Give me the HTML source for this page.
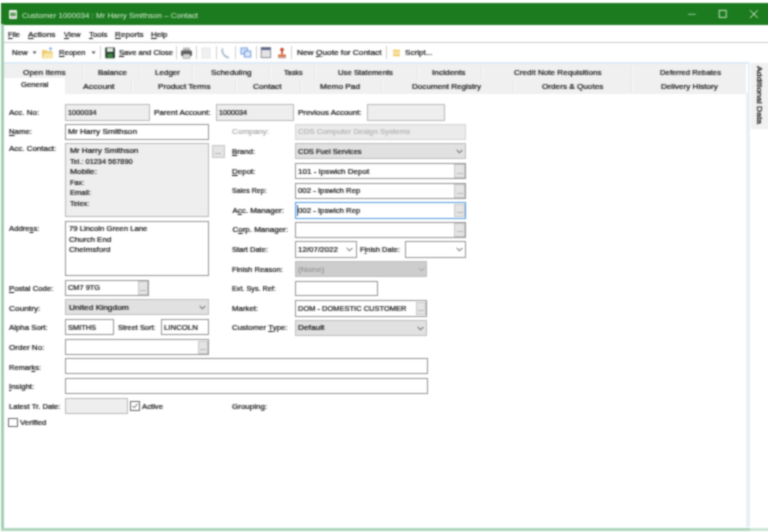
<!DOCTYPE html>
<html><head><meta charset="utf-8"><title>Customer</title>
<style>
html,body{margin:0;padding:0;background:#fff;}
body{width:768px;height:532px;position:relative;overflow:hidden;font-family:"Liberation Sans",sans-serif;font-size:8px;line-height:10px;}
#root{background:#fff;position:absolute;left:0;top:0;width:768px;height:532px;filter:url(#bl);}
.t{position:absolute;white-space:pre;transform-origin:0 50%;height:10px;-webkit-text-stroke:0.22px currentColor;}
.t u{text-decoration:underline;text-underline-offset:1px;text-decoration-thickness:0.6px;}
.nt{-webkit-text-stroke:0 !important;}
.b{position:absolute;box-sizing:content-box;}
</style></head><body><svg width="0" height="0" style="position:absolute"><defs><filter id="bl" x="0" y="0" width="100%" height="100%" color-interpolation-filters="sRGB"><feConvolveMatrix order="5" kernelMatrix="0.00048 0.00501 0.01095 0.00501 0.00048 0.00501 0.05222 0.11405 0.05222 0.00501 0.01095 0.11405 0.24912 0.11405 0.01095 0.00501 0.05222 0.11405 0.05222 0.00501 0.00048 0.00501 0.01095 0.00501 0.00048" divisor="1" edgeMode="duplicate" preserveAlpha="true"/></filter></defs></svg>
<div id="root">
<!-- window frame -->
<div class="b" style="left:1.2px;top:3.3px;width:767px;height:21.4px;background:#1c7b1f"></div>
<div class="b" style="left:1.3px;top:24px;width:2.3px;height:506.5px;background:#a3cfb4"></div>
<div class="b" style="left:1px;top:528px;width:767px;height:2.6px;background:#b0d6be"></div>
<div class="b" style="left:750px;top:528px;width:18px;height:2.6px;background:#cde5d5"></div>
<!-- menu/toolbar lines -->
<div class="b" style="left:4px;top:41.5px;width:764px;height:1.2px;background:#c9c9c9"></div>
<div class="b" style="left:4px;top:61.6px;width:746px;height:2.4px;background:#dcebf8"></div>
<!-- tabs -->
<div class="b" style="left:4px;top:64.3px;width:742px;height:29.4px;background:#f0f0f0"></div>
<div class="b" style="left:4px;top:78.2px;width:61px;height:16px;background:#fff"></div>
<div class="b" style="left:745.6px;top:93px;width:2px;height:434px;background:#efefef"></div>
<div class="b" style="left:747.6px;top:62px;width:2.4px;height:465px;background:#e3effa"></div>
<div class="b" style="left:750.8px;top:63px;width:17.2px;height:66px;background:#f1f1f1"></div>
<span class="t" style="left:763.6px;top:65.8px;transform-origin:0 0;transform:rotate(90deg) scaleX(1.07);color:#111">Additional Data</span>

<!-- title icon -->
<svg class="b" style="left:9px;top:10px" width="8" height="9" viewBox="0 0 8 9"><rect x="0" y="0" width="8" height="9" rx="0.8" fill="#e8f0e6"/><rect x="1.2" y="2.6" width="5.6" height="3.4" fill="#5a9a55"/><rect x="1" y="6.8" width="6" height="1" fill="#c9b8c9"/></svg>
<!-- window controls -->
<svg class="b" style="left:684px;top:8px" width="80" height="12" viewBox="0 0 80 12"><path d="M4 6.3 H11.6" stroke="#96cb98" stroke-width="1" fill="none"/><rect x="35.2" y="2.4" width="7" height="7" fill="none" stroke="#c4e2c4" stroke-width="1"/><path d="M66 2.2 L73.8 10 M73.8 2.2 L66 10" stroke="#d4ead4" stroke-width="1" fill="none"/></svg>
<!-- toolbar icons -->
<svg class="b" style="left:0;top:43.9px" width="440" height="18" viewBox="0 0 440 18">
<path d="M32.6 7.4 h4 l-2 2.6z" fill="#444"/>
<path d="M91.6 7.4 h4 l-2 2.6z" fill="#444"/>
<!-- folder -->
<path d="M42 6 h4 l1 1.2 h5.5 v7 h-10.5z" fill="#ecc96a"/><path d="M42.3 14.2 l2-5 h9.3 l-2 5z" fill="#f8e6a8"/><path d="M50.5 2.5 l0.8 1.7 1.7 0.5 -1.7 0.6 -0.8 1.7 -0.7 -1.7 -1.7 -0.6 1.7 -0.5z" fill="#7aa6e0"/>
<!-- save -->
<rect x="105.3" y="3.6" width="9.6" height="10.6" rx="0.6" fill="#26382a"/><rect x="107" y="4.2" width="6.2" height="3.6" fill="#e8efe8"/><rect x="107.4" y="9.6" width="5.4" height="4" fill="#3f8a45"/>
<!-- printer -->
<rect x="183" y="3.6" width="7" height="3.4" fill="#b8b8b8"/><rect x="181" y="6.4" width="11" height="5.6" rx="1" fill="#5e5e5e"/><rect x="183" y="10" width="7" height="4.2" fill="#d8d8d8" stroke="#777" stroke-width="0.5"/>
<!-- dim doc -->
<rect x="202" y="4" width="8" height="10" fill="#f0f0f0" stroke="#e0e0e0" stroke-width="0.8"/>
<!-- phone -->
<path d="M222.5 4.5 q-1 4.5 2.5 7.5 q2 1.8 4 1.2" fill="none" stroke="#a9bccb" stroke-width="1.8"/>
<!-- copy -->
<rect x="241" y="4" width="6.4" height="6" fill="#dbe8fa" stroke="#5f8fd8" stroke-width="0.9"/><rect x="244.4" y="7" width="6.4" height="6" fill="#dbe8fa" stroke="#5f8fd8" stroke-width="0.9"/>
<!-- calendar -->
<rect x="261.2" y="3.6" width="9.4" height="10" fill="#e4e4e6" stroke="#8a8c94" stroke-width="1"/><rect x="261.2" y="3.6" width="9.4" height="2.4" fill="#5a6488"/>
<!-- stamp -->
<circle cx="282" cy="5.6" r="1.9" fill="#c8482a"/><rect x="281.2" y="6.5" width="1.6" height="4" fill="#c8482a"/><rect x="278" y="10.4" width="8" height="2.4" rx="0.6" fill="#d86a3a"/><rect x="278" y="13.2" width="8" height="1" fill="#a88"/>
<!-- script -->
<rect x="393" y="5" width="7" height="8" rx="1" fill="#fbf4dc"/><path d="M393 6.6 h7 M393 9 h7 M393 11.4 h7" stroke="#eec04a" stroke-width="1.2"/>
</svg>
<div class="b" style="left:82px;top:66px;width:1px;height:12px;background:#e4e4e4"></div><div class="b" style="left:83px;top:66px;width:1px;height:12px;background:#fbfbfb"></div>
<div class="b" style="left:139px;top:66px;width:1px;height:12px;background:#e4e4e4"></div><div class="b" style="left:140px;top:66px;width:1px;height:12px;background:#fbfbfb"></div>
<div class="b" style="left:192px;top:66px;width:1px;height:12px;background:#e4e4e4"></div><div class="b" style="left:193px;top:66px;width:1px;height:12px;background:#fbfbfb"></div>
<div class="b" style="left:268.6px;top:66px;width:1px;height:12px;background:#e4e4e4"></div><div class="b" style="left:269.6px;top:66px;width:1px;height:12px;background:#fbfbfb"></div>
<div class="b" style="left:314px;top:66px;width:1px;height:12px;background:#e4e4e4"></div><div class="b" style="left:315px;top:66px;width:1px;height:12px;background:#fbfbfb"></div>
<div class="b" style="left:416.5px;top:66px;width:1px;height:12px;background:#e4e4e4"></div><div class="b" style="left:417.5px;top:66px;width:1px;height:12px;background:#fbfbfb"></div>
<div class="b" style="left:481px;top:66px;width:1px;height:12px;background:#e4e4e4"></div><div class="b" style="left:482px;top:66px;width:1px;height:12px;background:#fbfbfb"></div>
<div class="b" style="left:631px;top:66px;width:1px;height:12px;background:#e4e4e4"></div><div class="b" style="left:632px;top:66px;width:1px;height:12px;background:#fbfbfb"></div>
<div class="b" style="left:131px;top:80px;width:1px;height:12px;background:#e4e4e4"></div><div class="b" style="left:132px;top:80px;width:1px;height:12px;background:#fbfbfb"></div>
<div class="b" style="left:235px;top:80px;width:1px;height:12px;background:#e4e4e4"></div><div class="b" style="left:236px;top:80px;width:1px;height:12px;background:#fbfbfb"></div>
<div class="b" style="left:300px;top:80px;width:1px;height:12px;background:#e4e4e4"></div><div class="b" style="left:301px;top:80px;width:1px;height:12px;background:#fbfbfb"></div>
<div class="b" style="left:381px;top:80px;width:1px;height:12px;background:#e4e4e4"></div><div class="b" style="left:382px;top:80px;width:1px;height:12px;background:#fbfbfb"></div>
<div class="b" style="left:512.5px;top:80px;width:1px;height:12px;background:#e4e4e4"></div><div class="b" style="left:513.5px;top:80px;width:1px;height:12px;background:#fbfbfb"></div>
<div class="b" style="left:630.5px;top:80px;width:1px;height:12px;background:#e4e4e4"></div><div class="b" style="left:631.5px;top:80px;width:1px;height:12px;background:#fbfbfb"></div>
<div class="b" style="left:99.5px;top:46px;width:1.3px;height:13px;background:#cecece"></div>
<div class="b" style="left:175.5px;top:46px;width:1.3px;height:13px;background:#cecece"></div>
<div class="b" style="left:196.0px;top:46px;width:1.3px;height:13px;background:#cecece"></div>
<div class="b" style="left:215.5px;top:46px;width:1.3px;height:13px;background:#cecece"></div>
<div class="b" style="left:234.5px;top:46px;width:1.3px;height:13px;background:#cecece"></div>
<div class="b" style="left:256.0px;top:46px;width:1.3px;height:13px;background:#cecece"></div>
<div class="b" style="left:290.5px;top:46px;width:1.3px;height:13px;background:#cecece"></div>
<div class="b" style="left:386.0px;top:46px;width:1.3px;height:13px;background:#cecece"></div>
<div class="b" style="left:64.5px;top:103.5px;width:83.0px;height:15.0px;background:#eeeeee;border:1px solid #b8b8b8;"></div>
<div class="b" style="left:216.0px;top:103.5px;width:75.5px;height:15.0px;background:#eeeeee;border:1px solid #b8b8b8;"></div>
<div class="b" style="left:366.5px;top:103.5px;width:76.0px;height:15.0px;background:#eeeeee;border:1px solid #b8b8b8;"></div>
<div class="b" style="left:64.5px;top:123.8px;width:142.6px;height:14.7px;background:#fff;border:1px solid #939393;"></div>
<div class="b" style="left:64.5px;top:142.5px;width:142.6px;height:72.0px;background:#eeeeee;border:1px solid #b8b8b8;"></div>
<div class="b" style="left:211.5px;top:144.5px;width:11.0px;height:11.0px;background:#e4e4e4;border:1px solid #c4c4c4;"></div>
<div class="b" style="left:64.5px;top:221.0px;width:142.6px;height:53.0px;background:#fff;border:1px solid #939393;"></div>
<div class="b" style="left:64.5px;top:279.5px;width:82.0px;height:14.5px;background:#fff;border:1px solid #939393;"></div>
<div class="b" style="left:137.5px;top:281.0px;width:8.0px;height:11.5px;background:#e4e4e4;border:1px solid #c8c8c8;"></div>
<div class="b" style="left:64.5px;top:299.0px;width:142.6px;height:14.0px;background:#e1e1e1;border:1px solid #bcbcbc;"></div>
<div class="b" style="left:64.5px;top:318.9px;width:47.5px;height:14.4px;background:#fff;border:1px solid #939393;"></div>
<div class="b" style="left:161.0px;top:318.9px;width:46.1px;height:14.4px;background:#fff;border:1px solid #939393;"></div>
<div class="b" style="left:64.5px;top:338.9px;width:142.6px;height:14.1px;background:#fff;border:1px solid #939393;"></div>
<div class="b" style="left:197.5px;top:340.5px;width:8.6px;height:11.0px;background:#e4e4e4;border:1px solid #c8c8c8;"></div>
<div class="b" style="left:64.5px;top:358.3px;width:361.3px;height:14.2px;background:#fff;border:1px solid #939393;"></div>
<div class="b" style="left:64.5px;top:378.0px;width:361.3px;height:14.3px;background:#fff;border:1px solid #939393;"></div>
<div class="b" style="left:64.5px;top:397.8px;width:61.0px;height:14.3px;background:#eeeeee;border:1px solid #b8b8b8;"></div>
<div class="b" style="left:129.7px;top:400.9px;width:8.0px;height:8.0px;background:#fff;border:1px solid #666;"></div>
<div class="b" style="left:8.0px;top:417.5px;width:7.7px;height:7.7px;background:#fff;border:1px solid #666;"></div>
<div class="b" style="left:295.2px;top:124.0px;width:169.1px;height:14.2px;background:#ebebeb;border:1px solid #d4d4d4;"></div>
<div class="b" style="left:295.2px;top:143.2px;width:169.1px;height:14.3px;background:#e1e1e1;border:1px solid #bcbcbc;"></div>
<div class="b" style="left:295.2px;top:162.8px;width:169.1px;height:14.7px;background:#fff;border:1px solid #939393;"></div>
<div class="b" style="left:454.0px;top:164.3px;width:9.0px;height:11.7px;background:#e4e4e4;border:1px solid #c8c8c8;"></div>
<div class="b" style="left:295.2px;top:182.5px;width:169.1px;height:14.6px;background:#fff;border:1px solid #939393;"></div>
<div class="b" style="left:454.0px;top:184.0px;width:9.0px;height:11.7px;background:#e4e4e4;border:1px solid #c8c8c8;"></div>
<div class="b" style="left:295.2px;top:202.0px;width:169.1px;height:14.5px;background:#fff;border:1px solid #4a96e2;"></div>
<div class="b" style="left:454.0px;top:203.5px;width:9.0px;height:11.6px;background:#e4e4e4;border:1px solid #c8c8c8;"></div>
<div class="b" style="left:295.2px;top:221.5px;width:169.1px;height:14.5px;background:#fff;border:1px solid #939393;"></div>
<div class="b" style="left:454.0px;top:223.0px;width:9.0px;height:11.5px;background:#e4e4e4;border:1px solid #c8c8c8;"></div>
<div class="b" style="left:295.2px;top:241.1px;width:59.6px;height:14.6px;background:#fff;border:1px solid #939393;"></div>
<div class="b" style="left:404.5px;top:241.1px;width:59.8px;height:14.6px;background:#fff;border:1px solid #939393;"></div>
<div class="b" style="left:295.2px;top:260.5px;width:129.9px;height:14.7px;background:#cdcdcd;border:1px solid #bdbdbd;"></div>
<div class="b" style="left:295.2px;top:280.7px;width:81.0px;height:13.8px;background:#fff;border:1px solid #939393;"></div>
<div class="b" style="left:295.2px;top:300.2px;width:129.9px;height:14.5px;background:#fff;border:1px solid #939393;"></div>
<div class="b" style="left:415.5px;top:301.7px;width:8.4px;height:11.6px;background:#e4e4e4;border:1px solid #c8c8c8;"></div>
<div class="b" style="left:295.2px;top:319.8px;width:129.9px;height:14.0px;background:#e1e1e1;border:1px solid #bcbcbc;"></div>
<svg class="b" style="left:455.5px;top:149.3px" width="7" height="5" viewBox="0 0 7 5"><path d="M0.7 1 L3.5 3.8 L6.3 1" fill="none" stroke="#333" stroke-width="0.95"/></svg>
<svg class="b" style="left:346.1px;top:247.3px" width="7" height="5" viewBox="0 0 7 5"><path d="M0.7 1 L3.5 3.8 L6.3 1" fill="none" stroke="#333" stroke-width="0.95"/></svg>
<svg class="b" style="left:455.5px;top:247.3px" width="7" height="5" viewBox="0 0 7 5"><path d="M0.7 1 L3.5 3.8 L6.3 1" fill="none" stroke="#333" stroke-width="0.95"/></svg>
<svg class="b" style="left:418.0px;top:266.7px" width="7" height="5" viewBox="0 0 7 5"><path d="M0.7 1 L3.5 3.8 L6.3 1" fill="none" stroke="#999" stroke-width="0.95"/></svg>
<svg class="b" style="left:417.2px;top:325.7px" width="7" height="5" viewBox="0 0 7 5"><path d="M0.7 1 L3.5 3.8 L6.3 1" fill="none" stroke="#333" stroke-width="0.95"/></svg>
<svg class="b" style="left:198.5px;top:305.3px" width="7" height="5" viewBox="0 0 7 5"><path d="M0.7 1 L3.5 3.8 L6.3 1" fill="none" stroke="#333" stroke-width="0.95"/></svg>
<svg class="b" style="left:215px;top:152.5px" width="6" height="1.2" viewBox="0 0 6 1.2"><rect x="0.4" y="0" width="1" height="1" fill="#888"/><rect x="2.5" y="0" width="1" height="1" fill="#888"/><rect x="4.6" y="0" width="1" height="1" fill="#888"/></svg>
<svg class="b" style="left:139.5px;top:289.5px" width="6" height="1.2" viewBox="0 0 6 1.2"><rect x="0.4" y="0" width="1" height="1" fill="#888"/><rect x="2.5" y="0" width="1" height="1" fill="#888"/><rect x="4.6" y="0" width="1" height="1" fill="#888"/></svg>
<svg class="b" style="left:200px;top:348.5px" width="6" height="1.2" viewBox="0 0 6 1.2"><rect x="0.4" y="0" width="1" height="1" fill="#888"/><rect x="2.5" y="0" width="1" height="1" fill="#888"/><rect x="4.6" y="0" width="1" height="1" fill="#888"/></svg>
<svg class="b" style="left:456.5px;top:172.5px" width="6" height="1.2" viewBox="0 0 6 1.2"><rect x="0.4" y="0" width="1" height="1" fill="#888"/><rect x="2.5" y="0" width="1" height="1" fill="#888"/><rect x="4.6" y="0" width="1" height="1" fill="#888"/></svg>
<svg class="b" style="left:456.5px;top:192.5px" width="6" height="1.2" viewBox="0 0 6 1.2"><rect x="0.4" y="0" width="1" height="1" fill="#888"/><rect x="2.5" y="0" width="1" height="1" fill="#888"/><rect x="4.6" y="0" width="1" height="1" fill="#888"/></svg>
<svg class="b" style="left:456.5px;top:212.0px" width="6" height="1.2" viewBox="0 0 6 1.2"><rect x="0.4" y="0" width="1" height="1" fill="#888"/><rect x="2.5" y="0" width="1" height="1" fill="#888"/><rect x="4.6" y="0" width="1" height="1" fill="#888"/></svg>
<svg class="b" style="left:456.5px;top:231.0px" width="6" height="1.2" viewBox="0 0 6 1.2"><rect x="0.4" y="0" width="1" height="1" fill="#888"/><rect x="2.5" y="0" width="1" height="1" fill="#888"/><rect x="4.6" y="0" width="1" height="1" fill="#888"/></svg>
<svg class="b" style="left:417.7px;top:310.0px" width="6" height="1.2" viewBox="0 0 6 1.2"><rect x="0.4" y="0" width="1" height="1" fill="#888"/><rect x="2.5" y="0" width="1" height="1" fill="#888"/><rect x="4.6" y="0" width="1" height="1" fill="#888"/></svg>
<svg class="b" style="left:130.7px;top:401.9px" width="8" height="8" viewBox="0 0 8 8"><path d="M1.5 4 L3.2 5.8 L6.6 1.8" fill="none" stroke="#444" stroke-width="0.9"/></svg>
<div class="b" style="left:296.8px;top:205px;width:0.8px;height:10.5px;background:#357"></div>
<span class="t nt" style="left:22.0px;top:10.5px;color:#d4ead4;transform:scaleX(0.990)">Customer 1000034 : Mr Harry Smithson – Contact</span>
<span class="t " style="left:8.0px;top:29.7px;color:#111;transform:scaleX(0.931)"><u>F</u>ile</span>
<span class="t " style="left:27.5px;top:29.7px;color:#111;transform:scaleX(1.048)"><u>A</u>ctions</span>
<span class="t " style="left:63.5px;top:29.7px;color:#111;transform:scaleX(0.959)"><u>V</u>iew</span>
<span class="t " style="left:89.0px;top:29.7px;color:#111;transform:scaleX(0.990)"><u>T</u>ools</span>
<span class="t " style="left:115.0px;top:29.7px;color:#111;transform:scaleX(1.017)"><u>R</u>eports</span>
<span class="t " style="left:151.0px;top:29.7px;color:#111;transform:scaleX(1.003)"><u>H</u>elp</span>
<span class="t " style="left:11.8px;top:47.8px;color:#111;transform:scaleX(0.987)">New</span>
<span class="t " style="left:58.5px;top:47.8px;color:#111;transform:scaleX(0.945)"><u>R</u>eopen</span>
<span class="t " style="left:118.5px;top:47.8px;color:#111;transform:scaleX(0.956)"><u>S</u>ave and Close</span>
<span class="t " style="left:296.5px;top:47.8px;color:#111;transform:scaleX(1.038)">New <u>Q</u>uote for Contact</span>
<span class="t " style="left:405.0px;top:47.8px;color:#111;transform:scaleX(1.014)">Script...</span>
<span class="t " style="left:22.5px;top:68.1px;color:#111;transform:scaleX(1.028)">Open Items</span>
<span class="t " style="left:97.5px;top:68.1px;color:#111;transform:scaleX(1.003)">Balance</span>
<span class="t " style="left:155.0px;top:68.1px;color:#111;transform:scaleX(1.003)">Ledger</span>
<span class="t " style="left:211.0px;top:68.1px;color:#111;transform:scaleX(1.023)">Scheduling</span>
<span class="t " style="left:284.0px;top:68.1px;color:#111;transform:scaleX(0.905)">Tasks</span>
<span class="t " style="left:338.3px;top:68.1px;color:#111;transform:scaleX(0.966)">Use Statements</span>
<span class="t " style="left:432.0px;top:68.1px;color:#111;transform:scaleX(1.043)">Incidents</span>
<span class="t " style="left:514.0px;top:68.1px;color:#111;transform:scaleX(1.014)">Credit Note Requisitions</span>
<span class="t " style="left:660.0px;top:68.1px;color:#111;transform:scaleX(0.966)">Deferred Rebates</span>
<span class="t " style="left:82.5px;top:82.1px;color:#111;transform:scaleX(1.090)">Account</span>
<span class="t " style="left:157.5px;top:82.1px;color:#111;transform:scaleX(1.021)">Product Terms</span>
<span class="t " style="left:252.5px;top:82.1px;color:#111;transform:scaleX(1.033)">Contact</span>
<span class="t " style="left:320.0px;top:82.1px;color:#111;transform:scaleX(1.034)">Memo Pad</span>
<span class="t " style="left:412.0px;top:82.1px;color:#111;transform:scaleX(1.014)">Document Registry</span>
<span class="t " style="left:541.7px;top:82.1px;color:#111;transform:scaleX(1.021)">Orders &amp; Quotes</span>
<span class="t " style="left:661.0px;top:82.1px;color:#111;transform:scaleX(1.014)">Delivery History</span>
<span class="t " style="left:21.0px;top:80.2px;color:#111;transform:scaleX(0.966)">General</span>
<span class="t " style="left:8.6px;top:108.0px;color:#111;transform:scaleX(0.996)">Acc. No:</span>
<span class="t " style="left:8.6px;top:127.2px;color:#111;transform:scaleX(0.972)"><u>N</u>ame:</span>
<span class="t " style="left:8.6px;top:144.1px;color:#111;transform:scaleX(0.994)">Acc. Contact:</span>
<span class="t " style="left:8.6px;top:224.0px;color:#111;transform:scaleX(0.963)">Addre<u>s</u>s:</span>
<span class="t " style="left:8.6px;top:284.2px;color:#111;transform:scaleX(0.969)"><u>P</u>ostal Code:</span>
<span class="t " style="left:8.6px;top:304.4px;color:#111;transform:scaleX(1.039)">Country:</span>
<span class="t " style="left:8.6px;top:323.1px;color:#111;transform:scaleX(0.978)">Alpha Sort:</span>
<span class="t " style="left:8.6px;top:342.7px;color:#111;transform:scaleX(1.008)">Order No:</span>
<span class="t " style="left:8.6px;top:362.7px;color:#111;transform:scaleX(0.935)">Remar<u>k</u>s:</span>
<span class="t " style="left:8.6px;top:382.3px;color:#111;transform:scaleX(0.977)"><u>I</u>nsight:</span>
<span class="t " style="left:8.6px;top:401.5px;color:#111;transform:scaleX(0.951)">Latest Tr. Date:</span>
<span class="t " style="left:153.9px;top:108.0px;color:#111;transform:scaleX(1.004)">Parent Account:</span>
<span class="t " style="left:298.4px;top:108.0px;color:#111;transform:scaleX(0.993)">Previous Account:</span>
<span class="t " style="left:118.4px;top:323.1px;color:#111;transform:scaleX(0.929)">Street Sort:</span>
<span class="t " style="left:142.0px;top:401.5px;color:#111;transform:scaleX(0.963)">Active</span>
<span class="t " style="left:19.5px;top:418.3px;color:#111;transform:scaleX(0.993)">Verified</span>
<span class="t " style="left:232.4px;top:127.3px;color:#aaa;transform:scaleX(1.017)">Company:</span>
<span class="t " style="left:232.4px;top:147.0px;color:#111;transform:scaleX(0.980)"><u>B</u>rand:</span>
<span class="t " style="left:232.4px;top:166.7px;color:#111;transform:scaleX(0.997)"><u>D</u>epot:</span>
<span class="t " style="left:232.4px;top:186.1px;color:#111;transform:scaleX(0.884)">Sales Rep:</span>
<span class="t " style="left:232.4px;top:205.7px;color:#111;transform:scaleX(1.000)">A<u>c</u>c. Manager:</span>
<span class="t " style="left:232.4px;top:225.2px;color:#111;transform:scaleX(1.000)">C<u>o</u>rp. Manager:</span>
<span class="t " style="left:232.4px;top:244.8px;color:#111;transform:scaleX(0.941)">Start Date:</span>
<span class="t " style="left:232.4px;top:264.5px;color:#111;transform:scaleX(0.952)">Finish Reason:</span>
<span class="t " style="left:232.4px;top:284.0px;color:#111;transform:scaleX(0.904)">Ext. Sys. Ref:</span>
<span class="t " style="left:232.4px;top:303.7px;color:#111;transform:scaleX(0.982)">Market:</span>
<span class="t " style="left:232.4px;top:323.3px;color:#111;transform:scaleX(0.987)">Customer <u>T</u>ype:</span>
<span class="t " style="left:232.4px;top:401.5px;color:#111;transform:scaleX(1.002)">Grouping:</span>
<span class="t " style="left:360.0px;top:244.8px;color:#111;transform:scaleX(0.937)">F<u>i</u>nish Date:</span>
<span class="t " style="left:68.3px;top:107.8px;color:#111;transform:scaleX(0.921)">1000034</span>
<span class="t " style="left:218.8px;top:107.8px;color:#111;transform:scaleX(0.902)">1000034</span>
<span class="t " style="left:68.0px;top:127.2px;color:#111;transform:scaleX(1.035)">Mr Harry Smithson</span>
<span class="t " style="left:70.3px;top:146.4px;color:#111;transform:scaleX(1.026)">Mr Harry Smithson</span>
<span class="t " style="left:70.3px;top:157.0px;color:#111;transform:scaleX(0.920)">Tel.: 01234 567890</span>
<span class="t " style="left:70.3px;top:167.4px;color:#111;transform:scaleX(1.051)">Mobile:</span>
<span class="t " style="left:70.3px;top:177.8px;color:#111;transform:scaleX(0.912)">Fax:</span>
<span class="t " style="left:70.3px;top:188.2px;color:#111;transform:scaleX(0.944)">Email:</span>
<span class="t " style="left:70.3px;top:198.6px;color:#111;transform:scaleX(0.923)">Telex:</span>
<span class="t " style="left:68.6px;top:224.2px;color:#111;transform:scaleX(0.968)">79 Lincoln Green Lane</span>
<span class="t " style="left:68.6px;top:234.6px;color:#111;transform:scaleX(1.004)">Church End</span>
<span class="t " style="left:68.6px;top:245.0px;color:#111;transform:scaleX(1.012)">Chelmsford</span>
<span class="t " style="left:68.3px;top:283.4px;color:#111;transform:scaleX(0.926)">CM7 9TG</span>
<span class="t " style="left:68.6px;top:303.0px;color:#111;transform:scaleX(1.052)">United Kingdom</span>
<span class="t " style="left:68.3px;top:322.8px;color:#111;transform:scaleX(0.929)">SMITHS</span>
<span class="t " style="left:164.0px;top:322.8px;color:#111;transform:scaleX(0.974)">LINCOLN</span>
<span class="t " style="left:297.7px;top:127.3px;color:#b4b4b4;transform:scaleX(0.981)">CDS Computer Design Systems</span>
<span class="t " style="left:297.7px;top:146.8px;color:#111;transform:scaleX(0.941)">CDS Fuel Services</span>
<span class="t " style="left:297.7px;top:166.7px;color:#111;transform:scaleX(1.008)">101 - Ipswich Depot</span>
<span class="t " style="left:297.7px;top:186.1px;color:#111;transform:scaleX(0.973)">002 - Ipswich Rep</span>
<span class="t " style="left:297.7px;top:205.5px;color:#111;transform:scaleX(0.973)">002 - Ipswich Rep</span>
<span class="t " style="left:297.7px;top:244.7px;color:#111;transform:scaleX(0.994)">12/07/2022</span>
<span class="t " style="left:297.7px;top:264.5px;color:#999;transform:scaleX(1.076)">(None)</span>
<span class="t " style="left:297.7px;top:303.5px;color:#111;transform:scaleX(0.935)">DOM - DOMESTIC CUSTOMER</span>
<span class="t " style="left:297.7px;top:323.0px;color:#111;transform:scaleX(1.037)">Default</span>
</div></body></html>
